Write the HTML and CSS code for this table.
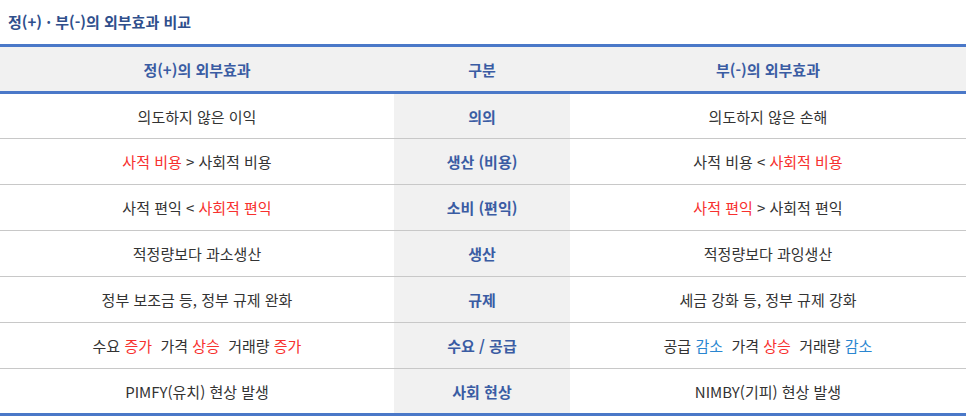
FILE: index.html
```html
<!DOCTYPE html>
<html lang="ko">
<head>
    <meta charset="UTF-8">
    <meta name="viewport" content="width=device-width, initial-scale=1.0">
    <title>정(+) · 부(-)의 외부효과 비교</title>
    <link rel="stylesheet" href="styles.css">
</head>
<body>
    <h2 class="title">정(+) · 부(-)의 외부효과 비교</h2>
    <table class="compare">
        <thead>
            <tr>
                <th>정(+)의 외부효과</th>
                <th class="mid">구분</th>
                <th>부(-)의 외부효과</th>
            </tr>
        </thead>
        <tbody>
            <tr>
                <td>의도하지 않은 이익</td>
                <th class="mid">의의</th>
                <td>의도하지 않은 손해</td>
            </tr>
            <tr>
                <td><span class="up">사적 비용</span> &gt; 사회적 비용</td>
                <th class="mid">생산 (비용)</th>
                <td>사적 비용 &lt; <span class="up">사회적 비용</span></td>
            </tr>
            <tr>
                <td>사적 편익 &lt; <span class="up">사회적 편익</span></td>
                <th class="mid">소비 (편익)</th>
                <td><span class="up">사적 편익</span> &gt; 사회적 편익</td>
            </tr>
            <tr>
                <td>적정량보다 과소생산</td>
                <th class="mid">생산</th>
                <td>적정량보다 과잉생산</td>
            </tr>
            <tr>
                <td>정부 보조금 등, 정부 규제 완화</td>
                <th class="mid">규제</th>
                <td>세금 강화 등, 정부 규제 강화</td>
            </tr>
            <tr>
                <td>수요 <span class="up">증가</span>&nbsp; 가격 <span class="up">상승</span>&nbsp; 거래량 <span class="up">증가</span></td>
                <th class="mid">수요 / 공급</th>
                <td>공급 <span class="down">감소</span>&nbsp; 가격 <span class="up">상승</span>&nbsp; 거래량 <span class="down">감소</span></td>
            </tr>
            <tr>
                <td>PIMFY(유치) 현상 발생</td>
                <th class="mid">사회 현상</th>
                <td>NIMBY(기피) 현상 발생</td>
            </tr>
        </tbody>
    </table>
</body>
</html>
```

FILE: styles.css
```css
* {
    margin: 0;
    padding: 0;
    box-sizing: border-box;
}

body {
    background: #fff;
    font-family: "Noto Sans CJK KR", "Noto Sans", sans-serif;
    color: #333;
}

.title {
    height: 44px;
    padding: 12px 8px 0;
    font-size: 15px;
    font-weight: bold;
    line-height: 20px;
    color: #2f4f8c;
}

.compare {
    width: 100%;
    border-collapse: collapse;
    border-top: 3px solid #4a78c8;
    border-bottom: 3px solid #4a78c8;
    font-size: 15px;
}

.compare thead th {
    height: 47px;
    background: #f1f1f1;
    border-bottom: 3px solid #4a78c8;
    color: #3a5ca3;
    font-weight: bold;
}

.compare th,
.compare td {
    text-align: center;
    vertical-align: middle;
}

.compare tbody tr {
    height: 46px;
    border-bottom: 1px solid #c8c8c8;
}

.compare tbody tr:last-child {
    border-bottom: none;
}

.compare tbody td {
    width: 394px;
    font-weight: normal;
}

.compare tbody th {
    background: #f1f1f1;
    color: #3a5ca3;
    font-weight: bold;
}

.compare .mid {
    width: 176px;
}

.compare td:last-child,
.compare th:last-child {
    width: 396px;
}

.up {
    color: #f7302e;
}

.down {
    color: #2a86d0;
}
```
